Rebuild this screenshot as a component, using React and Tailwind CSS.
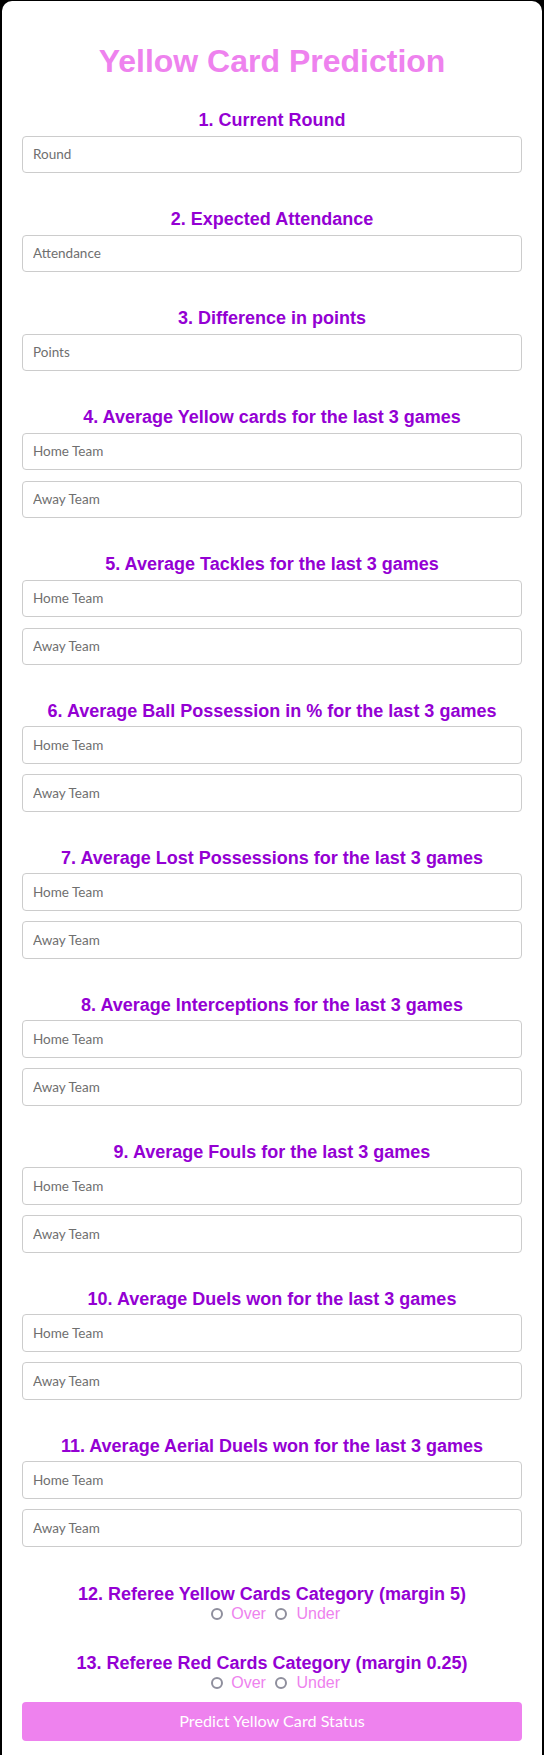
import React, { useState } from "react";

const sections = [
  { title: "1. Current Round", fields: ["Round"] },
  { title: "2. Expected Attendance", fields: ["Attendance"] },
  { title: "3. Difference in points", fields: ["Points"] },
  { title: "4. Average Yellow cards for the last 3 games", fields: ["Home Team", "Away Team"] },
  { title: "5. Average Tackles for the last 3 games", fields: ["Home Team", "Away Team"] },
  { title: "6. Average Ball Possession in % for the last 3 games", fields: ["Home Team", "Away Team"] },
  { title: "7. Average Lost Possessions for the last 3 games", fields: ["Home Team", "Away Team"] },
  { title: "8. Average Interceptions for the last 3 games", fields: ["Home Team", "Away Team"] },
  { title: "9. Average Fouls for the last 3 games", fields: ["Home Team", "Away Team"] },
  { title: "10. Average Duels won for the last 3 games", fields: ["Home Team", "Away Team"] },
  { title: "11. Average Aerial Duels won for the last 3 games", fields: ["Home Team", "Away Team"] },
];

function Heading({ children }) {
  return (
    <h3 className="text-center font-['Liberation_Sans',Arial,sans-serif] font-bold text-[18px] leading-[20px] text-[#9400d3]">
      {children}
    </h3>
  );
}

function RadioRow({ name, value, onChange }) {
  return (
    <div className="flex justify-center items-center h-[18px] pl-[6.6px] font-['Liberation_Sans',Arial,sans-serif] text-[16px] leading-[18px] text-[#ee82ee]">
      <input
        type="radio"
        name={name}
        checked={value === "over"}
        onChange={() => onChange("over")}
        className="appearance-none w-[12px] h-[12px] rounded-full border-2 border-[#8f8f9d] bg-white mr-[8.7px]"
      />
      <span className="mr-[9.6px]">Over</span>
      <input
        type="radio"
        name={name}
        checked={value === "under"}
        onChange={() => onChange("under")}
        className="appearance-none w-[12px] h-[12px] rounded-full border-2 border-[#8f8f9d] bg-white mr-[9px]"
      />
      <span>Under</span>
    </div>
  );
}

export default function App() {
  const [yellowRef, setYellowRef] = useState("");
  const [redRef, setRedRef] = useState("");

  return (
    <div className="min-h-screen bg-black pt-[1px] pl-[2px] pr-[2px]">
      <div className="bg-white rounded-t-[10px] px-[20px] pt-[41.5px] pb-[40px]">
        <h1 className="text-center font-['Liberation_Sans',Arial,sans-serif] font-bold text-[32px] leading-[36px] text-[#ee82ee] mb-[31.6px]">
          Yellow Card Prediction
        </h1>

        <form className="flex flex-col" onSubmit={(e) => e.preventDefault()}>
          <div className="flex flex-col gap-[36.2px]">
            {sections.map((s) => (
              <div key={s.title} className="flex flex-col">
                <Heading>{s.title}</Heading>
                <div className="flex flex-col gap-[10.7px] mt-[5.5px]">
                  {s.fields.map((f) => (
                    <input
                      key={f}
                      type="text"
                      placeholder={f}
                      className="w-full h-[37.3px] border border-[#ccc] rounded-[4px] pl-[10px] bg-white font-['Lato',sans-serif] text-[13.5px] text-[#333] placeholder:text-[#6f6f6f] outline-none"
                    />
                  ))}
                </div>
              </div>
            ))}
          </div>

          <div className="mt-[37.3px]">
            <Heading>12. Referee Yellow Cards Category (margin 5)</Heading>
            <div className="mt-[1px]">
              <RadioRow name="yellow" value={yellowRef} onChange={setYellowRef} />
            </div>
          </div>

          <div className="mt-[30.5px]">
            <Heading>13. Referee Red Cards Category (margin 0.25)</Heading>
            <div className="mt-[1px]">
              <RadioRow name="red" value={redRef} onChange={setRedRef} />
            </div>
          </div>

          <button
            type="submit"
            className="mt-[9.3px] w-full h-[39.3px] rounded-[4px] bg-[#ee82ee] text-white font-['Lato',sans-serif] text-[16.2px]"
          >
            Predict Yellow Card Status
          </button>
        </form>
      </div>
    </div>
  );
}
